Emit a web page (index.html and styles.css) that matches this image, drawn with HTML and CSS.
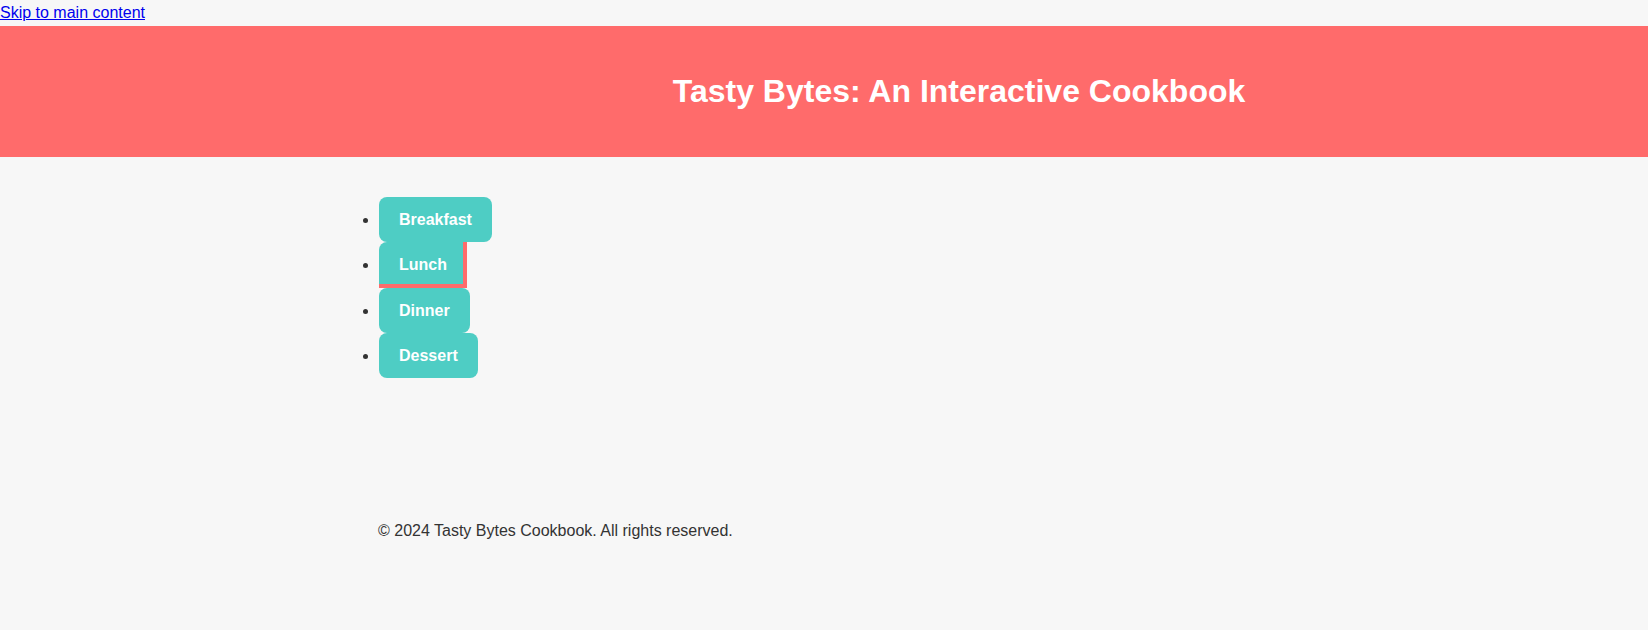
FILE: index.html
```html
<!DOCTYPE html>
<html lang="en">
<head>
<meta charset="utf-8">
<title>Tasty Bytes: An Interactive Cookbook</title>
<link rel="stylesheet" href="styles.css">
</head>
<body>
<a class="skip-link" href="#main">Skip to main content</a>
<header class="site-header">
  <h1 class="site-title">Tasty Bytes: An Interactive Cookbook</h1>
</header>
<main id="main" class="container">
  <nav class="categories" aria-label="Recipe categories">
    <ul class="category-list">
      <li><button class="category-btn" type="button">Breakfast</button></li>
      <li><button class="category-btn active" type="button" aria-current="true">Lunch</button></li>
      <li><button class="category-btn" type="button">Dinner</button></li>
      <li><button class="category-btn" type="button">Dessert</button></li>
    </ul>
  </nav>
</main>
<footer class="site-footer container">
  <p class="copyright">&copy; 2024 Tasty Bytes Cookbook. All rights reserved.</p>
</footer>
</body>
</html>
```
FILE: styles.css
```css
html, body {
  margin: 0;
  padding: 0;
}

body {
  background: #f7f7f7;
  color: #333333;
  font-family: "Liberation Sans", Arial, sans-serif;
  font-size: 16px;
  line-height: 1.6;
}

.skip-link {
  color: #0000ee;
  text-decoration: underline;
}

.site-header {
  background: #ff6b6b;
  padding: 40px 0 40px 270px;
  text-align: center;
}

.site-title {
  margin: 0;
  color: #ffffff;
  font-size: 32px;
  font-weight: bold;
  line-height: 1.6;
}

.container {
  max-width: 892px;
  margin: 0 auto;
}

.category-list {
  margin: 40px 0 16px;
  padding: 0 0 0 1px;
  list-style: disc;
}

.category-list li {
  line-height: 25px;
}

.category-btn {
  display: block;
  background: #4ecdc4;
  color: #ffffff;
  border: none;
  border-radius: 8px;
  padding: 10px 20px;
  font-family: "Liberation Sans", Arial, sans-serif;
  font-size: 16px;
  font-weight: bold;
  line-height: 25px;
  cursor: pointer;
}

.category-btn.active {
  border-right: 4px solid #ff6b6b;
  border-bottom: 4px solid #ff6b6b;
  border-radius: 8px 0 0 0;
  padding: 10px 16px 7px 20px;
}

.site-footer {
  padding: 124px 0 40px;
}

.copyright {
  margin: 0;
}
```
